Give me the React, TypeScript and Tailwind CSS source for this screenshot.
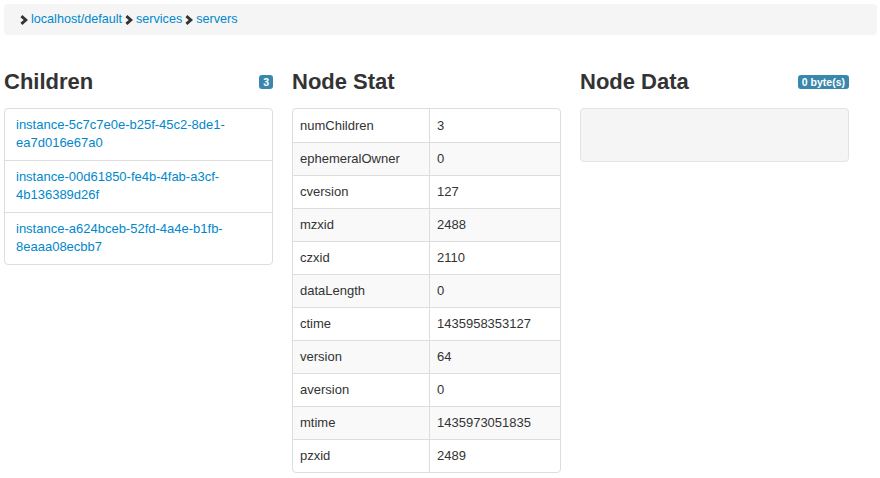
import React from 'react';

const font = { fontFamily: '"Liberation Sans", Arial, Helvetica, sans-serif' };

const crumbs = ['localhost/default', 'services', 'servers'];

const children = [
  'instance-5c7c7e0e-b25f-45c2-8de1-ea7d016e67a0',
  'instance-00d61850-fe4b-4fab-a3cf-4b136389d26f',
  'instance-a624bceb-52fd-4a4e-b1fb-8eaaa08ecbb7',
];

const stat: [string, string][] = [
  ['numChildren', '3'],
  ['ephemeralOwner', '0'],
  ['cversion', '127'],
  ['mzxid', '2488'],
  ['czxid', '2110'],
  ['dataLength', '0'],
  ['ctime', '1435958353127'],
  ['version', '64'],
  ['aversion', '0'],
  ['mtime', '1435973051835'],
  ['pzxid', '2489'],
];

function Chevron() {
  return (
    <svg width="8" height="10" viewBox="0 0 8 10" className="shrink-0">
      <path d="M1.4 1.2 L5.8 5 L1.4 8.8" fill="none" stroke="#333" strokeWidth="2.9" />
    </svg>
  );
}

function Badge({ children }: { children: React.ReactNode }) {
  return (
    <span className="inline-flex h-[14px] items-center rounded-[3px] bg-[#3a87ad] px-[4px] text-[10.5px] font-bold leading-none text-white">
      {children}
    </span>
  );
}

function Heading({ title, badge }: { title: string; badge: React.ReactNode }) {
  return (
    <div className="mb-[13px] flex h-[26px] items-center justify-between">
      <h3 className="text-[22px] font-bold leading-[26px] text-[#333]">{title}</h3>
      {badge}
    </div>
  );
}

export default function App() {
  return (
    <div className="min-h-[478px] bg-white p-[4px] text-[13px] text-[#333]" style={font}>
      <div className="flex h-[31px] w-[873px] items-center gap-[3px] rounded-[4px] bg-[#f5f5f5] pl-[16px] text-[12.6px]">
        {crumbs.map((c) => (
          <React.Fragment key={c}>
            <Chevron />
            <a className="text-[#0088cc]">{c}</a>
          </React.Fragment>
        ))}
      </div>

      <div className="mt-[34px] grid grid-cols-[269px_269px_269px] gap-x-[19px]">
        <div>
          <Heading title="Children" badge={<Badge>3</Badge>} />
          <div className="rounded-[4px] border border-[#ddd]">
            {children.map((c, i) => (
              <div
                key={c}
                className={`px-[11px] pt-[7px] pb-[8px] leading-[18px] ${i > 0 ? 'border-t border-[#ddd]' : ''}`}
              >
                <a className="text-[#0088cc]">{c}</a>
              </div>
            ))}
          </div>
        </div>

        <div>
          <Heading title="Node Stat" badge={null} />
          <div className="overflow-hidden rounded-[4px] border border-[#ddd]">
            <table className="w-full border-separate border-spacing-0">
              <tbody>
                {stat.map(([k, v], i) => (
                  <tr key={k} className={i % 2 === 1 ? 'bg-[#f9f9f9]' : ''}>
                    <td
                      className={`w-[136px] px-[7px] pt-[7px] pb-[7px] leading-[18px] ${i > 0 ? 'border-t border-[#ddd]' : 'pt-[8px]'}`}
                    >
                      {k}
                    </td>
                    <td
                      className={`border-l border-[#ddd] px-[7px] pt-[7px] pb-[7px] leading-[18px] ${i > 0 ? 'border-t' : 'pt-[8px]'}`}
                    >
                      {v}
                    </td>
                  </tr>
                ))}
              </tbody>
            </table>
          </div>
        </div>

        <div>
          <Heading title="Node Data" badge={<Badge>0 byte(s)</Badge>} />
          <div className="h-[54px] rounded-[4px] border border-[#e3e3e3] bg-[#f5f5f5]" />
        </div>
      </div>
    </div>
  );
}
